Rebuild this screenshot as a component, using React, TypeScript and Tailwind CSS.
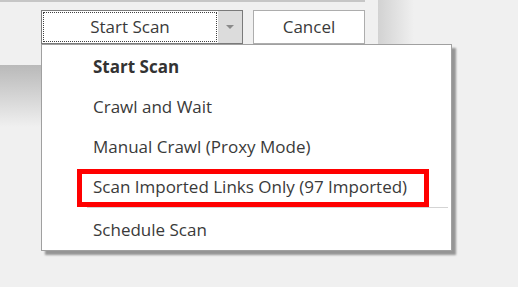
import React from "react";

const items = ["Crawl and Wait", "Manual Crawl (Proxy Mode)", "Scan Imported Links Only (97 Imported)"];

export default function App() {
  return (
    <div className="relative w-[518px] h-[287px] overflow-hidden bg-[#f0f0f0] font-['Open_Sans',sans-serif] text-[17px] text-[#3a3a3a]">
      <div className="absolute left-0 top-0 w-[365px] h-[2px] bg-[#c6c6c6]" />
      <div className="absolute left-[378px] top-0 w-[36px] h-[44px] bg-linear-to-r from-[#d2d2d2] to-[#f0f0f0]" />
      <div className="absolute left-0 top-[65px] w-[41px] h-[62px] bg-linear-to-b from-[#b9b9b9] to-[#f0f0f0]" />

      <div className="relative flex items-start gap-[10px] pt-[10px] pl-[41px]">
        <div className="flex h-[34px] w-[202px] border border-[#7a7a7a] bg-white">
          <div className="flex w-[176px] p-[1px]">
            <div className="flex flex-1 items-center justify-center border border-dotted border-[#404040] pb-[1px]">
              Start Scan
            </div>
          </div>
          <div className="flex flex-1 items-center justify-center bg-[#dcdcdc]">
            <svg width="8" height="4" viewBox="0 0 8 4">
              <path d="M0 0H8L4 4Z" fill="#8a8a8a" />
            </svg>
          </div>
        </div>
        <div className="flex h-[34px] w-[112px] items-center justify-center border border-[#adadad] bg-white pb-[1px]">
          Cancel
        </div>
      </div>

      <div className="relative ml-[41px] w-[411px] h-[207px] border border-[#a0a0a0] bg-white pt-[2px] shadow-[4px_4px_2px_rgba(0,0,0,0.38)]">
        <div className="flex h-[40px] items-center pl-[51px] font-bold text-[#333333]">Start Scan</div>
        {items.map((t) => (
          <div key={t} className="flex h-[40px] items-center pl-[51px]">
            {t}
          </div>
        ))}
        <div className="ml-[45px] mr-[3px] h-px bg-[#d4d4d4]" />
        <div className="mt-[2px] flex h-[40px] items-center pl-[51px]">Schedule Scan</div>
      </div>

      <div className="absolute left-[77px] top-[169px] w-[352px] h-[38px] border-[5px] border-[#ff0000]" />
    </div>
  );
}
